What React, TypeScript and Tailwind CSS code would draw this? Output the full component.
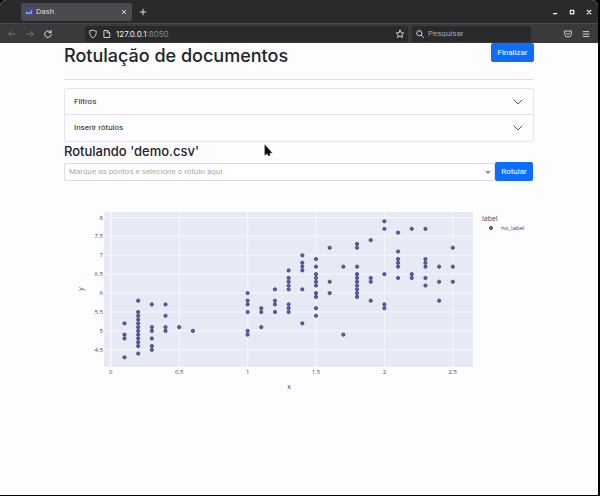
import type { ReactNode } from "react";

const samples: [number, number[]][] = [
  [0.1, [4.3, 4.8, 4.9, 5.2]],
  [0.2, [4.4, 4.6, 4.7, 4.8, 4.9, 5, 5.1, 5.2, 5.3, 5.4, 5.5, 5.8]],
  [0.3, [4.5, 4.6, 4.8, 5, 5.1, 5.7]],
  [0.4, [5, 5.1, 5.4, 5.7]],
  [0.5, [5.1]],
  [0.6, [5]],
  [1, [4.9, 5, 5.5, 5.7, 5.8, 6]],
  [1.1, [5.1, 5.5, 5.6]],
  [1.2, [5.5, 5.7, 5.8, 6.1]],
  [1.3, [5.5, 5.6, 5.7, 6.1, 6.2, 6.3, 6.4, 6.6]],
  [1.4, [5.2, 6.1, 6.6, 6.7, 6.8, 7]],
  [1.5, [5.4, 5.6, 5.9, 6, 6.2, 6.3, 6.4, 6.5, 6.7, 6.9]],
  [1.6, [6, 6.3, 7.2]],
  [1.7, [4.9, 6.7]],
  [1.8, [5.9, 6, 6.1, 6.2, 6.3, 6.4, 6.5, 6.7, 7.2, 7.3]],
  [1.9, [5.8, 6.3, 6.4, 7.4]],
  [2, [5.6, 5.7, 6.5, 7.7, 7.9]],
  [2.1, [6.4, 6.7, 6.8, 6.9, 7.1, 7.6]],
  [2.2, [6.4, 6.5, 7.7]],
  [2.3, [6.2, 6.4, 6.7, 6.8, 6.9, 7.7]],
  [2.4, [5.8, 6.3, 6.7]],
  [2.5, [6.3, 6.7, 7.2]],
];

const xTicks = [0, 0.5, 1, 1.5, 2, 2.5];
const yTicks = [4.5, 5, 5.5, 6, 6.5, 7, 7.5, 8];
const sx = (v: number) => 46.8 + v * 136.8;
const sy = (v: number) => 27.5 + (8 - v) * 37.8;

function ScatterPlot() {
  return (
    <svg
      viewBox="0 0 470 210"
      className="block w-full font-['Open_Sans','Noto_Sans',sans-serif]"
      role="img"
      aria-label="y por x"
    >
      <rect x="40" y="22" width="369" height="155" fill="#e5eaf5" />
      <g stroke="#f6f8fd" strokeWidth="1">
        {xTicks.map((t) => (
          <line key={t} x1={sx(t)} x2={sx(t)} y1="22" y2="177" strokeWidth={t === 0 ? 1.6 : 1} />
        ))}
        {yTicks.map((t) => (
          <line key={t} x1="40" x2="409" y1={sy(t)} y2={sy(t)} />
        ))}
      </g>
      <g fill="#5c60c4" stroke="#35385c" strokeWidth="0.8">
        {samples.map(([x, ys]) => ys.map((y) => <circle key={`${x}-${y}`} cx={sx(x)} cy={sy(y)} r="1.6" />))}
      </g>
      <g fill="#444956" fontSize="6">
        {xTicks.map((t) => (
          <text key={t} x={sx(t)} y="184" textAnchor="middle">{t}</text>
        ))}
        {yTicks.map((t) => (
          <text key={t} x="39" y={sy(t) + 2} textAnchor="end">{t}</text>
        ))}
        <text x="225" y="199" fontSize="7" textAnchor="middle">x</text>
        <text transform="translate(19 99) rotate(-90)" fontSize="7" textAnchor="middle">y</text>
        <text x="418" y="31" fontSize="7">label</text>
        <text x="437" y="40">no_label</text>
      </g>
      <circle cx="427" cy="38" r="1.6" fill="#5c60c4" stroke="#35385c" strokeWidth="0.8" />
    </svg>
  );
}

function Glyph({ children, className = "" }: { children: ReactNode; className?: string }) {
  return (
    <svg
      viewBox="0 0 10 10"
      className={`size-[10px] shrink-0 ${className}`}
      fill="none"
      stroke="currentColor"
      strokeWidth="1"
      strokeLinecap="round"
      strokeLinejoin="round"
      aria-hidden="true"
    >
      {children}
    </svg>
  );
}

function TabStrip() {
  return (
    <div className="flex h-[23px] items-center bg-[#2a292b] pl-[21px] pr-1 text-[#d8d8da]">
      <div className="flex h-[18px] w-[111px] items-center rounded-xs bg-[#4b4a4e] pl-1 pr-[3px]">
        <svg viewBox="0 0 8 8" className="size-2" aria-hidden="true">
          <rect width="8" height="8" rx="1" fill="#3c4f91" />
          <path d="M1.5 6V4.5M3 6V3.8M4.5 6V4.5M6.3 6V2.5" stroke="#c9d5ff" strokeWidth="0.9" />
        </svg>
        <span className="ml-[3px] flex-1 font-[Roboto,sans-serif] text-[8px]">Dash</span>
        <button type="button" aria-label="Fechar aba">
          <Glyph><path d="M3.4 3.4 6.6 6.6M6.6 3.4 3.4 6.6" /></Glyph>
        </button>
      </div>
      <button type="button" aria-label="Nova aba" className="ml-[6px]">
        <Glyph><path d="M5 2.2V7.8M2.2 5H7.8" /></Glyph>
      </button>
      <div className="ml-auto flex gap-[7px] text-[#f2f2f2]">
        <button type="button" aria-label="Minimizar">
          <Glyph><path d="M3.4 6.6H6.8" strokeWidth="1.2" /></Glyph>
        </button>
        <button type="button" aria-label="Maximizar">
          <Glyph><path d="M3.4 3.4H6.8V6.8H3.4Z" strokeWidth="1.3" /></Glyph>
        </button>
        <button type="button" aria-label="Fechar">
          <Glyph><path d="M3.4 3.4 6.8 6.8M6.8 3.4 3.4 6.8" strokeWidth="1.3" /></Glyph>
        </button>
      </div>
    </div>
  );
}

function Toolbar() {
  return (
    <div className="flex h-5 items-center border-t border-[#484749] bg-[#3a393c] pl-[7px] pr-[7px] font-[Roboto,sans-serif] text-[8px] text-[#cfcfd2]">
      <div className="flex w-[78px] gap-2">
        <button type="button" aria-label="Voltar" className="text-[#77767a]">
          <Glyph><path d="M8.5 5H1.8M4.4 2.4 1.8 5 4.4 7.6" strokeWidth="0.9" /></Glyph>
        </button>
        <button type="button" aria-label="Avançar" className="text-[#77767a]">
          <Glyph><path d="M1.5 5H8.2M5.6 2.4 8.2 5 5.6 7.6" strokeWidth="0.9" /></Glyph>
        </button>
        <button type="button" aria-label="Recarregar" className="text-[#e4e4e6]">
          <Glyph><path d="M7.7 3.2A3.3 3.3 0 1 0 8.3 5.6M8.2 1.5V3.7H6" /></Glyph>
        </button>
      </div>
      <div className="flex h-4 min-w-0 flex-1 items-center gap-1 rounded-xs bg-[#2a292b] pl-[3px] pr-[3px]">
        <Glyph><path d="M5 1.2 8.3 2.3C8.4 5.5 7.4 7.8 5 8.9 2.6 7.8 1.6 5.5 1.7 2.3Z" /></Glyph>
        <Glyph><path d="M2.3 1.5H5.4L7.8 3.8V8.5H2.3ZM5.2 1.7V4H7.6" /></Glyph>
        <span className="flex-1 font-[Inter,sans-serif] text-[#8c8b90]">
          <span className="text-[#f0f0f2]">127.0.0.1</span>:8050
        </span>
        <button type="button" aria-label="Adicionar aos favoritos">
          <Glyph><path d="M5 1.2 6.1 3.7 8.8 4 6.8 5.8 7.4 8.5 5 7.1 2.6 8.5 3.2 5.8 1.2 4 3.9 3.7Z" /></Glyph>
        </button>
      </div>
      <label className="ml-1 flex h-4 w-[119px] items-center gap-[3px] rounded-xs bg-[#2a292b] pl-[3px]">
        <Glyph><path d="M4.3 1.6A2.6 2.6 0 1 1 4.3 6.8 2.6 2.6 0 1 1 4.3 1.6M6.2 6.2 8.6 8.6" /></Glyph>
        <input
          type="search"
          aria-label="Pesquisar"
          placeholder="Pesquisar"
          className="w-full min-w-0 bg-transparent outline-none placeholder:text-[#a9a8ac]"
        />
      </label>
      <button type="button" aria-label="Pocket" className="ml-8">
        <Glyph><path d="M1.6 2H8.4V4.8A3.4 3.4 0 0 1 1.6 4.8ZM3.4 4.2 5 5.7 6.6 4.2" /></Glyph>
      </button>
      <button type="button" aria-label="Menu" className="ml-2">
        <Glyph><path d="M2.2 2.6H7.8M2.2 5H7.8M2.2 7.4H7.8" /></Glyph>
      </button>
    </div>
  );
}

function AccordionItem({ title }: { title: string }) {
  return (
    <button
      type="button"
      aria-expanded="false"
      className="flex h-[26px] w-full items-center justify-between pl-[9px] pr-[10px] text-left text-[8px] text-[#212529]"
    >
      {title}
      <Glyph className="text-[#55585c]"><path d="M1 3 5 7 9 3" /></Glyph>
    </button>
  );
}

export default function App() {
  return (
    <div className="flex min-h-screen flex-col bg-black pb-px pr-[2px]">
      <div className="flex flex-1 flex-col overflow-hidden rounded-t-md bg-[#fdfcff]">
        <header>
          <TabStrip />
          <Toolbar />
        </header>
        <main className="relative flex-1 px-16 font-[Roboto,sans-serif] text-[#212529]">
          <div className="flex h-[37px] items-start justify-between border-b border-[#dddce0]">
            <h1 className="font-[Inter,sans-serif] text-[18px] leading-[26px] font-medium">Rotulação de documentos</h1>
            <button type="button" className="h-[19px] w-[43px] rounded-xs bg-[#0d6efd] text-[8px] text-white">
              Finalizar
            </button>
          </div>
          <section className="mt-2 divide-y divide-[#e2e1e5] rounded-xs border border-[#e5e4e8]">
            <AccordionItem title="Filtros" />
            <AccordionItem title="Inserir rótulos" />
          </section>
          <h2 className="font-[Inter,sans-serif] text-[13px] leading-[18px] font-medium">Rotulando 'demo.csv'</h2>
          <div className="mt-[2px] flex items-center pr-px">
            <div className="relative min-w-0 flex-1">
              <select
                aria-label="Rótulo"
                defaultValue=""
                className="block h-[18px] w-full appearance-none rounded-xs border border-[#dcdbdf] bg-white pl-1 text-[8px] text-[#aaaaad] outline-none"
              >
                <option value="">Marque os pontos e selecione o rótulo aqui</option>
              </select>
              <svg viewBox="0 0 6 3" className="pointer-events-none absolute top-2 right-1 h-[3px] w-[6px]" aria-hidden="true">
                <path d="M0 0H6L3 3Z" fill="#8e8d91" />
              </svg>
            </div>
            <button type="button" className="h-[19px] w-[38px] rounded-xs bg-[#0d6efd] text-[8px] text-white">
              Rotular
            </button>
          </div>
          <div className="mt-[9px]">
            <ScatterPlot />
          </div>
          <svg viewBox="0 0 9 13" className="pointer-events-none absolute top-[101px] left-[264px] h-[13px] w-[9px]" aria-hidden="true">
            <path d="M.7.6V11.4L3.1 9.6 4.3 12 6.3 11.1 5.6 9H8.3Z" fill="#09090b" stroke="#77777b" strokeWidth="0.4" />
          </svg>
        </main>
      </div>
    </div>
  );
}
